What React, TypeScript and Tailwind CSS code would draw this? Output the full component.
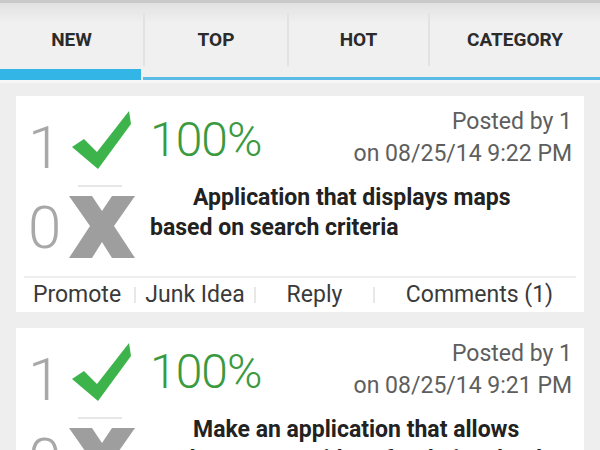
import React from 'react';

type Idea = {
  up: number;
  down: number;
  percent: string;
  postedBy: string;
  postedAt: string;
  title: string;
  comments: number;
};

const ideas: Idea[] = [
  {
    up: 1,
    down: 0,
    percent: '100%',
    postedBy: '1',
    postedAt: '08/25/14 9:22 PM',
    title: 'Application that displays maps based on search criteria',
    comments: 1,
  },
  {
    up: 1,
    down: 0,
    percent: '100%',
    postedBy: '1',
    postedAt: '08/25/14 9:21 PM',
    title: 'Make an application that allows students to post ideas for their school and vote',
    comments: 0,
  },
];

const tabs = ['NEW', 'TOP', 'HOT', 'CATEGORY'];

function CheckIcon() {
  return (
    <svg width="60" height="58" viewBox="0 0 60 58" className="block">
      <polygon points="0,36 12,28 25,41 57,0 59,13 26,58" fill="#3cb44b" />
    </svg>
  );
}

function CrossIcon() {
  return (
    <svg width="66" height="62" viewBox="0 0 66 62" className="block">
      <polygon
        points="0,0 23,0 33,15 43,0 66,0 45,30 66,62 43,62 33,46 23,62 0,62 21,30"
        fill="#9e9e9e"
      />
    </svg>
  );
}

function IdeaCard({ idea }: { idea: Idea }) {
  return (
    <div className="mx-4 bg-white">
      <div className="flex pt-[16px] pl-[12px] pr-[12px]">
        {/* votes column */}
        <div className="w-[122px] shrink-0 flex flex-col">
          <div className="flex items-start h-[73px]">
            <span className="w-[44px] text-[60px] leading-none font-light text-[#a8a8a8] mt-[6px]">
              {idea.up}
            </span>
            <div className="mt-[-1px]">
              <CheckIcon />
            </div>
          </div>
          <div className="ml-[50px] w-[44px] h-[2px] bg-[#e6e6e6]" />
          <div className="flex items-start mt-[9px]">
            <span className="w-[41px] text-[60px] leading-none font-light text-[#a8a8a8] mt-[2px]">
              {idea.down}
            </span>
            <CrossIcon />
          </div>
        </div>
        {/* main column */}
        <div className="flex-1 flex flex-col">
          <div className="flex justify-between items-start">
            <span className="text-[48px] leading-none font-light text-[#3b9a3f] mt-[4px] tracking-[-1px]">
              {idea.percent}
            </span>
            <div className="text-right text-[23px] leading-[32px] text-[#5e5e5e] mt-[-6px]">
              <div>Posted by {idea.postedBy}</div>
              <div>on {idea.postedAt}</div>
            </div>
          </div>
          <p className="mt-[13px] pr-[20px] text-[23px] leading-[30px] font-bold text-[#222] indent-[43px]">
            {idea.title}
          </p>
        </div>
      </div>
      <div className="mx-2 mt-[18px] h-[2px] bg-[#eeeeee]" />
      <div className="grid grid-cols-[110px_120px_119px_1fr] items-center h-[34px] px-2 text-[23px] text-[#3a3a3a]">
        <div className="text-center pr-[4px]">Promote</div>
        <div className="flex items-center">
          <span className="w-[2px] h-[16px] bg-[#e8e8e8]" />
          <span className="flex-1 text-center">Junk Idea</span>
        </div>
        <div className="flex items-center">
          <span className="w-[2px] h-[16px] bg-[#e8e8e8]" />
          <span className="flex-1 text-center">Reply</span>
        </div>
        <div className="flex items-center">
          <span className="w-[2px] h-[16px] bg-[#e8e8e8]" />
          <span className="flex-1 text-center pl-[8px]">Comments ({idea.comments})</span>
        </div>
      </div>
    </div>
  );
}

export default function App() {
  return (
    <div className="w-[600px] h-[450px] overflow-hidden bg-[#eeeeee] font-['Roboto',sans-serif]">
      {/* tab bar */}
      <div className="border-t-[3px] border-[#c9c9c9] bg-gradient-to-b from-[#e2e2e2] to-[#f0f0f0] to-[25%]">
        <div className="grid grid-cols-[143px_144px_141px_1fr]">
          {tabs.map((tab, i) => (
            <div key={tab} className="flex flex-col">
              <div className="h-[66px] flex items-start">
                {i > 0 ? (
                  <span className="w-[2px] h-[53px] bg-[#e2e2e2] mt-[10px]" />
                ) : null}
                <span className="flex-1 self-center text-center text-[19px] font-bold text-[#2b2b2b] mt-[8px]">
                  {tab}
                </span>
              </div>
              <div className="h-[11px] flex flex-col justify-end">
                {i === 0 ? (
                  <div className="h-[11px] bg-[#33b5e5] mr-[2px]" />
                ) : (
                  <div className="h-[3px] bg-[#5cbbe5]" />
                )}
              </div>
            </div>
          ))}
        </div>
        <div className="h-[3px] bg-[#f6f6f6]" />
      </div>
      <div className="flex flex-col gap-[16px] pt-[13px]">
        {ideas.map((idea, i) => (
          <IdeaCard key={i} idea={idea} />
        ))}
      </div>
    </div>
  );
}
